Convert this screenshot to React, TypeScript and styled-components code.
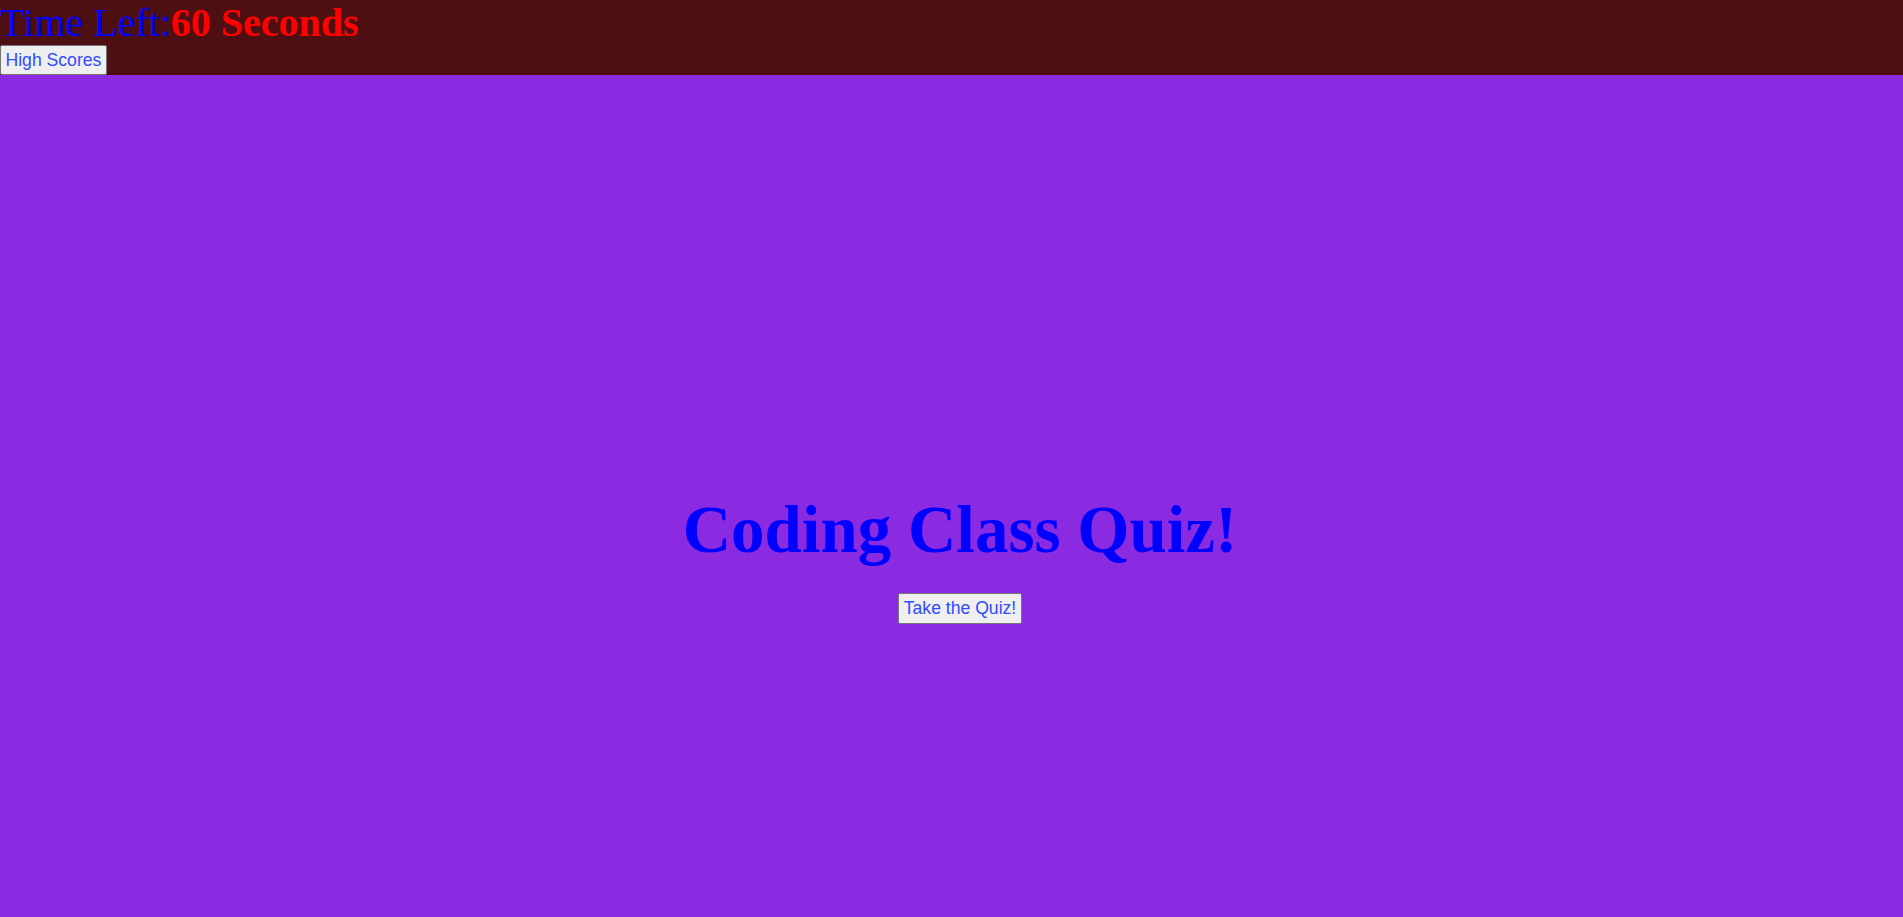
import React from "react";
import styled, { createGlobalStyle } from "styled-components";

const GlobalStyle = createGlobalStyle`
  html, body {
    margin: 0;
    padding: 0;
    background: #8a2be2;
  }
  body {
    font-family: "Liberation Serif", "Times New Roman", serif;
  }
`;

const Header = styled.header`
  display: flex;
  flex-direction: column;
  align-items: flex-start;
  height: 75px;
  background: #4d0f11;
`;

const Timer = styled.h1`
  margin: 0;
  font-family: "Liberation Serif", "Times New Roman", serif;
  font-size: 40px;
  font-weight: normal;
  line-height: 45px;
  color: #0000ff;
  white-space: nowrap;
`;

const Seconds = styled.span`
  color: #ff0000;
  font-weight: bold;
`;

const PlainButton = styled.button<{ $h: number }>`
  box-sizing: border-box;
  height: ${(p) => p.$h}px;
  padding: 0 4.5px;
  margin: 0;
  font-family: "Liberation Sans", Arial, sans-serif;
  font-size: 17.6px;
  color: #2f4cff;
  background: #efefef;
  border: 1px solid #767676;
  border-radius: 2px;
  cursor: pointer;
`;

const Main = styled.main`
  display: flex;
  flex-direction: column;
  align-items: center;
  height: 842px;
  box-sizing: border-box;
  padding: 417px 0 0 17px;
  background: #8a2be2;
`;

const Title = styled.h1`
  margin: 0 0 27px;
  font-family: "Liberation Serif", "Times New Roman", serif;
  font-size: 67px;
  font-weight: bold;
  line-height: 74px;
  color: #0000ff;
  white-space: nowrap;
`;

export default function App() {
  return (
    <>
      <GlobalStyle />
      <Header>
        <Timer>
          Time Left:<Seconds>60 Seconds</Seconds>
        </Timer>
        <PlainButton $h={30}>High Scores</PlainButton>
      </Header>
      <Main>
        <Title>Coding Class Quiz!</Title>
        <PlainButton $h={31}>Take the Quiz!</PlainButton>
      </Main>
    </>
  );
}
